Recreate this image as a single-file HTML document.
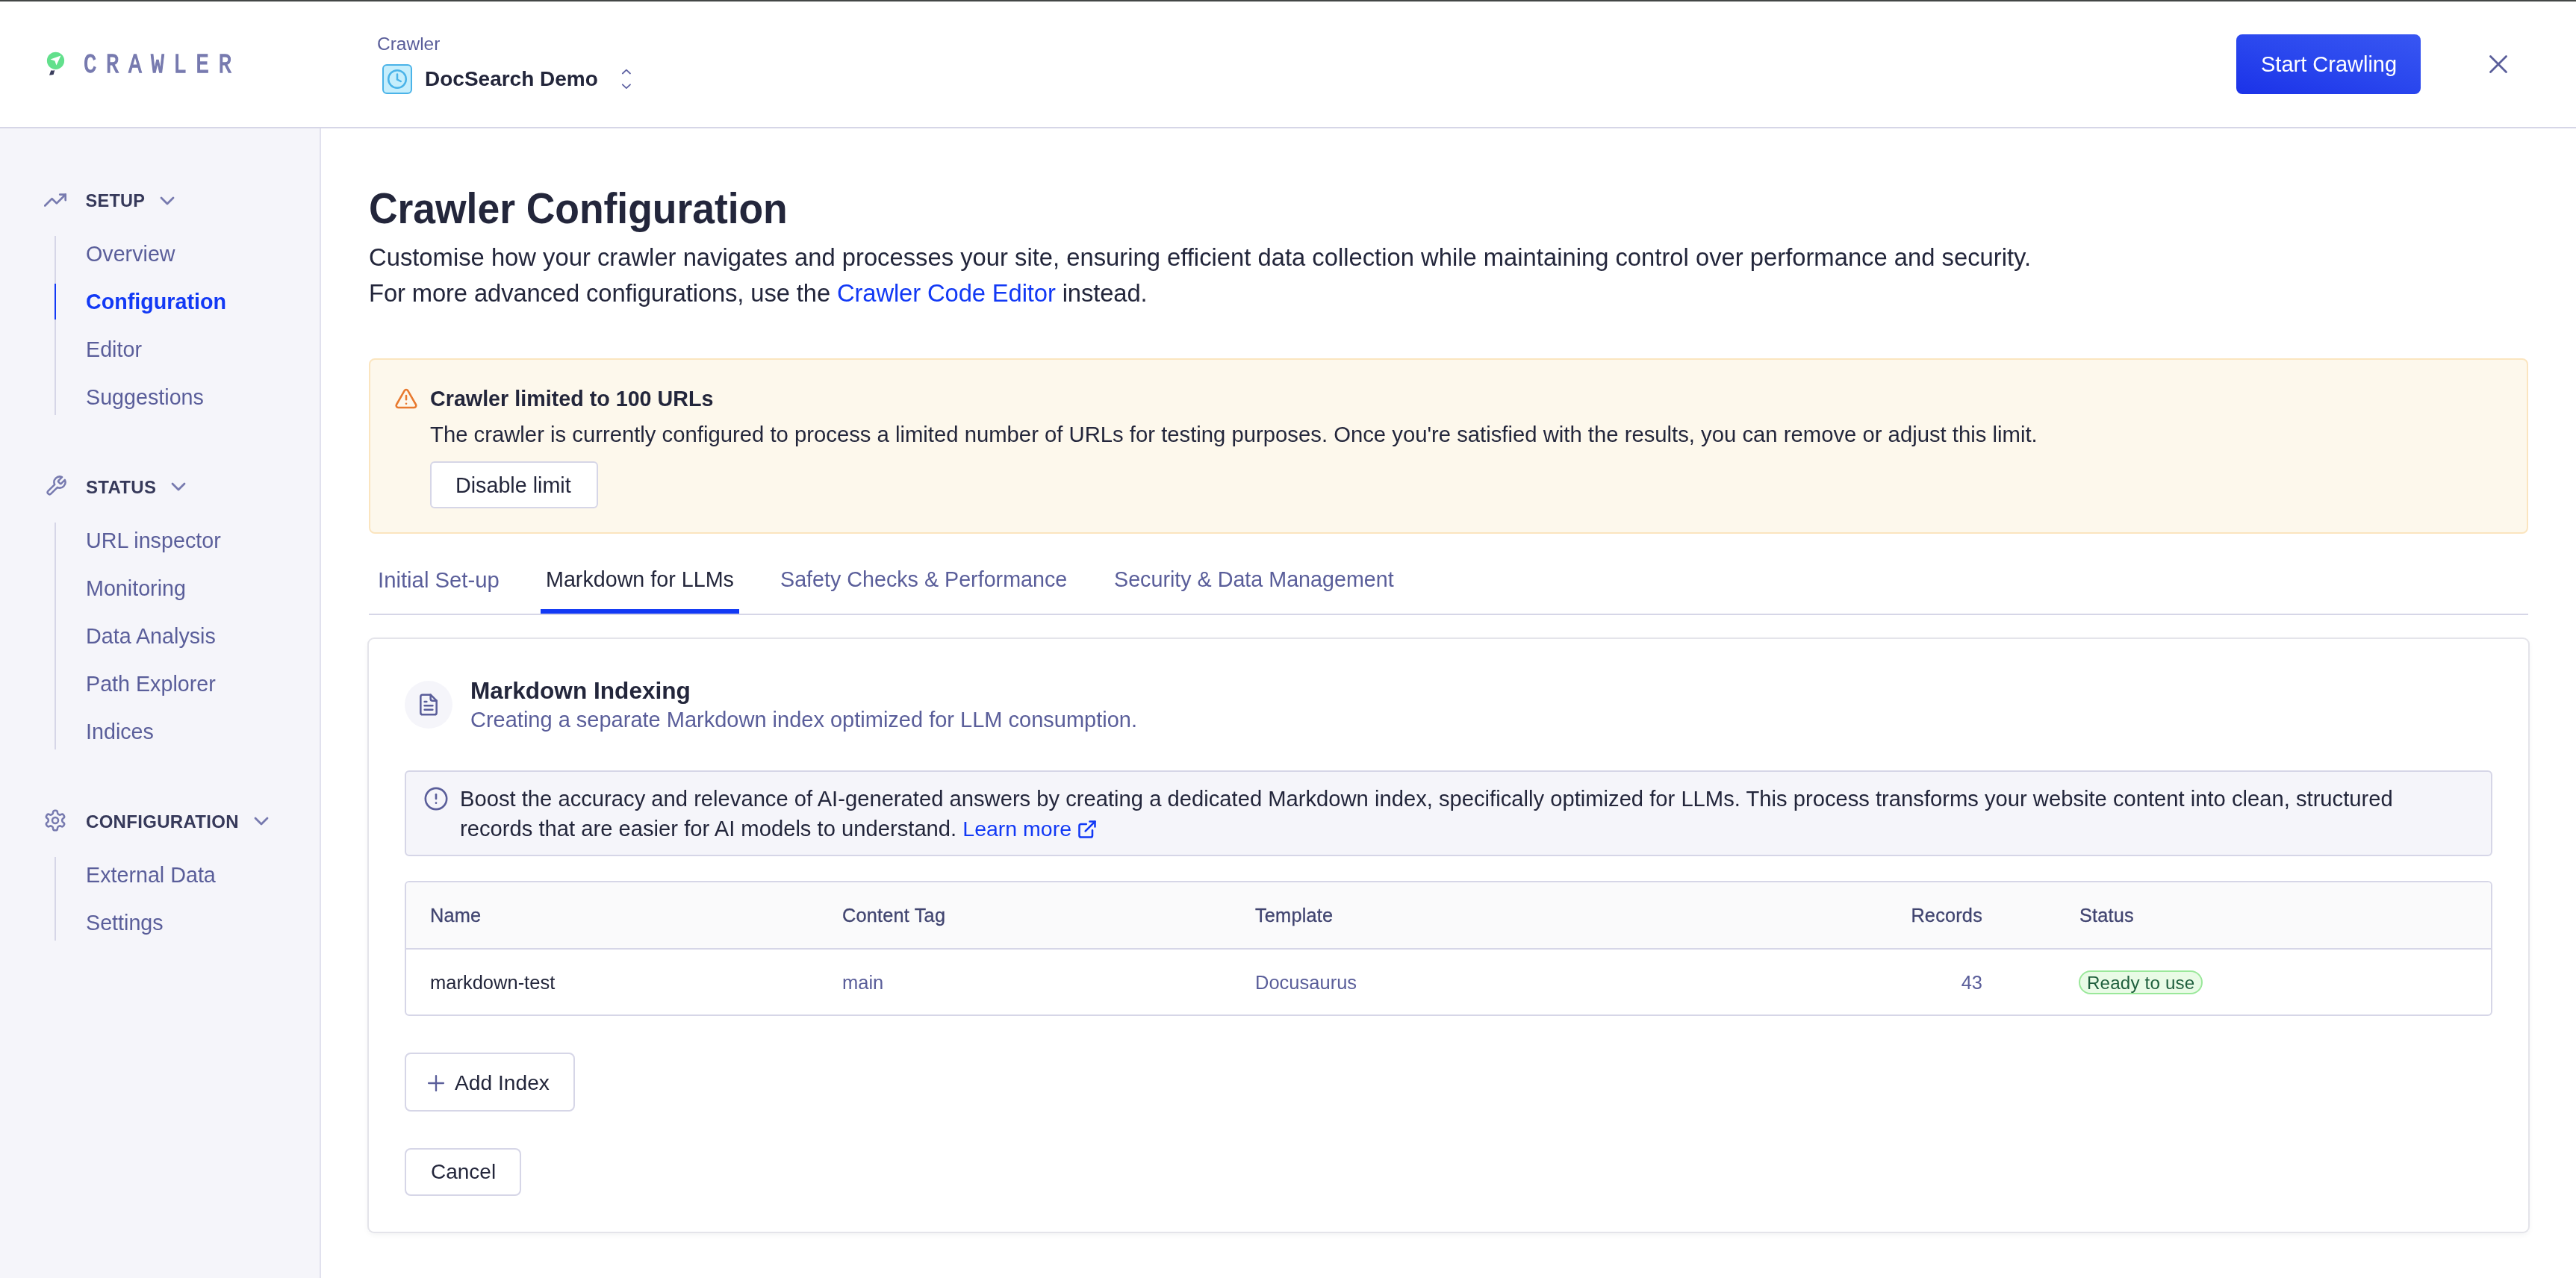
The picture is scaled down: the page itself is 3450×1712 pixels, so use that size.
<!DOCTYPE html>
<html><head><meta charset="utf-8">
<style>
*{margin:0;padding:0;box-sizing:border-box}
body{will-change:transform}html,body{width:3450px;height:1712px;overflow:hidden;background:#fff;font-family:"Liberation Sans",sans-serif;color:#23263b}
.a{position:absolute;white-space:nowrap;line-height:1}
#topbar{position:absolute;left:0;top:0;width:3450px;height:2px;background:#444746}
#header{position:absolute;left:0;top:2px;width:3450px;height:170px;border-bottom:2px solid #d6d6e7;background:#fff}
#sidebar{position:absolute;left:0;top:172px;width:430px;height:1540px;background:#f5f5fa;border-right:2px solid #e1e1ee}
.sec{font-size:24px;font-weight:bold;color:#36395a;letter-spacing:0.3px}
.item{font-size:28.7px;color:#5a5e9a}
.vline{position:absolute;left:73px;width:2px;background:#d6d6e7}
.btn{position:absolute;background:#fff;border:2px solid #d6d6e7;border-radius:8px}
.th{font-size:25.3px;color:#404470;letter-spacing:0.2px;-webkit-text-stroke:0.3px #404470}
.td{font-size:25.5px}
</style></head><body>
<div id="topbar"></div>
<div id="header"></div>
<div id="sidebar"></div>

<!-- logo -->
<svg class="a" style="left:60px;top:66px" width="32" height="40" viewBox="0 0 32 40">
  <circle cx="14.5" cy="15.3" r="11.6" fill="#62e08c"/>
  <path d="M21.5 8.6 L7.5 13.6 L13.4 15.4 L15.5 21.5 Z" fill="#fff"/>
  <path d="M8.3 28.2 Q10.8 28.9 13.3 28 L11.6 34.1 L6 34.7 Z" fill="#3a3d5c"/>
</svg>
<div class="a" style="left:112px;top:68.6px;font-family:'Liberation Mono',monospace;font-size:37px;letter-spacing:16.4px;color:#777aaf;-webkit-text-stroke:1.4px #777aaf;transform:scaleX(0.78);transform-origin:0 0">CRAWLER</div>

<div class="a" style="left:505px;top:47px;font-size:24.5px;color:#5a5e9a">Crawler</div>
<div class="a" style="left:512px;top:86px;width:40px;height:40px;background:#c6eefc;border:2px solid #4ab3e8;border-radius:6px"></div>
<svg class="a" style="left:512px;top:86px" width="40" height="40" viewBox="0 0 40 40">
  <circle cx="20" cy="20" r="11.8" fill="none" stroke="#4ab3e8" stroke-width="2.5"/>
  <path d="M20 13.5 V20.5 L24.8 23" fill="none" stroke="#4ab3e8" stroke-width="2.5" stroke-linecap="round"/>
</svg>
<div class="a" style="left:569px;top:92px;font-size:28px;font-weight:bold;color:#23263b">DocSearch Demo</div>
<svg class="a" style="left:830px;top:89px" width="18" height="34" viewBox="0 0 18 34">
  <path d="M3.8 9.5 L8.9 4.6 L14 9.5" fill="none" stroke="#5f63a3" stroke-width="1.8" stroke-linecap="round" stroke-linejoin="round"/>
  <path d="M3.8 24.3 L8.9 29.1 L14 24.3" fill="none" stroke="#5f63a3" stroke-width="1.8" stroke-linecap="round" stroke-linejoin="round"/>
</svg>

<div class="a" style="left:2995px;top:46px;width:247px;height:80px;border-radius:8px;background:linear-gradient(15deg,#1b32e8 0%,#2a47ee 50%,#3856f2 100%)"></div>
<div class="a" style="left:3028px;top:72px;font-size:29px;color:#fff">Start Crawling</div>
<svg class="a" style="left:3330px;top:70px" width="32" height="32" viewBox="0 0 32 32">
  <path d="M5.5 5.5 L26.5 26.5 M26.5 5.5 L5.5 26.5" stroke="#5a5e9a" stroke-width="2.8" stroke-linecap="round"/>
</svg>

<!-- sidebar -->
<svg class="a" style="left:59px;top:253px" width="30" height="30" viewBox="0 0 24 24" fill="none" stroke="#777aaf" stroke-width="2.2" stroke-linecap="round" stroke-linejoin="round"><polyline points="23 6 13.5 15.5 8.5 10.5 1 18"/><polyline points="17 6 23 6 23 12"/></svg>
<div class="a sec" style="left:114.5px;top:258px;font-size:23.5px">SETUP<svg style="margin-left:14px;vertical-align:top;margin-top:-5px" width="32" height="32" viewBox="0 0 24 24" fill="none" stroke="#777aaf" stroke-width="2.1" stroke-linecap="round" stroke-linejoin="round"><polyline points="6 9 12 15 18 9"/></svg></div>
<div class="vline" style="top:316px;height:240px"></div>
<div class="a" style="left:73px;top:380px;width:2px;height:48px;background:#1239f5"></div>
<div class="a item" style="left:115px;top:326px">Overview</div>
<div class="a item" style="left:115px;top:390px;color:#1239f5;font-weight:bold">Configuration</div>
<div class="a item" style="left:115px;top:454px">Editor</div>
<div class="a item" style="left:115px;top:518px">Suggestions</div>

<svg class="a" style="left:60px;top:636px" width="30" height="30" viewBox="0 0 24 24" fill="none" stroke="#777aaf" stroke-width="2" stroke-linecap="round" stroke-linejoin="round"><path d="M14.7 6.3a1 1 0 0 0 0 1.4l1.6 1.6a1 1 0 0 0 1.4 0l3.77-3.77a6 6 0 0 1-7.94 7.94l-6.91 6.91a2.12 2.12 0 0 1-3-3l6.91-6.91a6 6 0 0 1 7.94-7.94l-3.76 3.76z"/></svg>
<div class="a sec" style="left:115px;top:641px">STATUS<svg style="margin-left:14px;vertical-align:top;margin-top:-5px" width="32" height="32" viewBox="0 0 24 24" fill="none" stroke="#777aaf" stroke-width="2.1" stroke-linecap="round" stroke-linejoin="round"><polyline points="6 9 12 15 18 9"/></svg></div>
<div class="vline" style="top:700px;height:304px"></div>
<div class="a item" style="left:115px;top:710px">URL inspector</div>
<div class="a item" style="left:115px;top:774px">Monitoring</div>
<div class="a item" style="left:115px;top:838px">Data Analysis</div>
<div class="a item" style="left:115px;top:902px">Path Explorer</div>
<div class="a item" style="left:115px;top:966px">Indices</div>

<svg class="a" style="left:58px;top:1083px" width="32" height="32" viewBox="0 0 24 24" fill="none" stroke="#777aaf" stroke-width="1.9" stroke-linecap="round" stroke-linejoin="round"><path d="M12.22 2h-.44a2 2 0 0 0-2 2v.18a2 2 0 0 1-1 1.73l-.43.25a2 2 0 0 1-2 0l-.15-.08a2 2 0 0 0-2.73.73l-.22.38a2 2 0 0 0 .73 2.73l.15.1a2 2 0 0 1 1 1.72v.51a2 2 0 0 1-1 1.74l-.15.09a2 2 0 0 0-.73 2.73l.22.38a2 2 0 0 0 2.730.73l.15-.08a2 2 0 0 1 2 0l.43.25a2 2 0 0 1 1 1.73V20a2 2 0 0 0 2 2h.44a2 2 0 0 0 2-2v-.18a2 2 0 0 1 1-1.73l.43-.25a2 2 0 0 1 2 0l.15.08a2 2 0 0 0 2.73-.73l.22-.39a2 2 0 0 0-.73-2.73l-.15-.08a2 2 0 0 1-1-1.74v-.5a2 2 0 0 1 1-1.74l.15-.09a2 2 0 0 0 .73-2.73l-.22-.38a2 2 0 0 0-2.73-.73l-.15.08a2 2 0 0 1-2 0l-.43-.25a2 2 0 0 1-1-1.73V4a2 2 0 0 0-2-2z"/><circle cx="12" cy="12" r="3"/></svg>
<div class="a sec" style="left:115px;top:1089px">CONFIGURATION<svg style="margin-left:14px;vertical-align:top;margin-top:-5px" width="32" height="32" viewBox="0 0 24 24" fill="none" stroke="#777aaf" stroke-width="2.1" stroke-linecap="round" stroke-linejoin="round"><polyline points="6 9 12 15 18 9"/></svg></div>
<div class="vline" style="top:1148px;height:112px"></div>
<div class="a item" style="left:115px;top:1158px">External Data</div>
<div class="a item" style="left:115px;top:1222px">Settings</div>

<!-- main -->
<div class="a" style="left:494px;top:254px;font-size:53.5px;font-weight:bold;color:#23263b;letter-spacing:-0.05px;transform:scaleY(1.06);transform-origin:0 45.3px">Crawler Configuration</div>
<div class="a" style="left:494px;top:321px;font-size:32.78px;line-height:48px;color:#23263b">Customise how your crawler navigates and processes your site, ensuring efficient data collection while maintaining control over performance and security.<br><span style="letter-spacing:-0.12px">For more advanced configurations, use the <span style="color:#1239f5">Crawler Code Editor</span> instead.</span></div>

<div class="a" style="left:494px;top:480px;width:2892px;height:235px;background:#fdf8ec;border:2px solid #fbe5bf;border-radius:8px"></div>
<svg class="a" style="left:528px;top:518px" width="32" height="32" viewBox="0 0 24 24" fill="none" stroke="#e8792e" stroke-width="1.9" stroke-linecap="round" stroke-linejoin="round"><path d="m21.73 18-8-14a2 2 0 0 0-3.48 0l-8 14A2 2 0 0 0 4 21h16a2 2 0 0 0 1.73-3"/><path d="M12 9v4"/><path d="M12 17h.01"/></svg>
<div class="a" style="left:576px;top:520px;font-size:28.7px;font-weight:bold;color:#23263b">Crawler limited to 100 URLs</div>
<div class="a" style="left:576px;top:568px;font-size:29.27px;color:#23263b">The crawler is currently configured to process a limited number of URLs for testing purposes. Once you're satisfied with the results, you can remove or adjust this limit.</div>
<div class="btn" style="left:576px;top:618px;width:225px;height:63px;border-radius:6px"></div>
<div class="a" style="left:610px;top:636px;font-size:28.7px;color:#23263b">Disable limit</div>

<!-- tabs -->
<div class="a" style="left:494px;top:822px;width:2892px;height:2px;background:#d6d6e7"></div>
<div class="a" style="left:724px;top:816px;width:266px;height:6px;background:#1239f5"></div>
<div class="a" style="left:506px;top:762px;font-size:29.3px;color:#5a5e9a">Initial Set-up</div>
<div class="a" style="left:731px;top:762px;font-size:28.7px;color:#23263b">Markdown for LLMs</div>
<div class="a" style="left:1045px;top:762px;font-size:28.7px;color:#5a5e9a">Safety Checks &amp; Performance</div>
<div class="a" style="left:1492px;top:762px;font-size:28.7px;color:#5a5e9a">Security &amp; Data Management</div>

<!-- card -->
<div class="a" style="left:494px;top:856px;width:2892px;height:794px;background:#fff;border-radius:7px;box-shadow:0 0 0 2px #e4e4ea,0 3px 8px rgba(35,38,59,0.07)"></div>
<div class="a" style="left:542px;top:912px;width:64px;height:64px;border-radius:50%;background:#f5f5fa"></div>
<svg class="a" style="left:558px;top:928px" width="32" height="32" viewBox="0 0 24 24" fill="none" stroke="#5a5e9a" stroke-width="1.9" stroke-linecap="round" stroke-linejoin="round"><path d="M14 2H6a2 2 0 0 0-2 2v16a2 2 0 0 0 2 2h12a2 2 0 0 0 2-2V8z"/><path d="M14 2v4a2 2 0 0 0 2 2h4"/><line x1="16" y1="13" x2="8" y2="13"/><line x1="16" y1="17" x2="8" y2="17"/><line x1="10" y1="9" x2="8" y2="9"/></svg>
<div class="a" style="left:630px;top:910px;font-size:31.6px;font-weight:bold;color:#23263b">Markdown Indexing</div>
<div class="a" style="left:630px;top:950px;font-size:29px;color:#5a5e9a">Creating a separate Markdown index optimized for LLM consumption.</div>

<div class="a" style="left:542px;top:1032px;width:2796px;height:115px;background:#f5f5fa;border:2px solid #d6d6e7;border-radius:6px"></div>
<svg class="a" style="left:567px;top:1053px" width="34" height="34" viewBox="0 0 24 24" fill="none" stroke="#5a5e9a" stroke-width="1.85" stroke-linecap="round" stroke-linejoin="round"><circle cx="12" cy="12" r="10"/><line x1="12" y1="8" x2="12" y2="12"/><line x1="12" y1="16" x2="12.01" y2="16"/></svg>
<div class="a" style="left:616px;top:1050px;font-size:29.2px;line-height:40px;color:#23263b">Boost the accuracy and relevance of AI-generated answers by creating a dedicated Markdown index, specifically optimized for LLMs. This process transforms your website content into clean, structured<br>records that are easier for AI models to understand. <span style="color:#1239f5;font-size:28.5px">Learn more <svg style="vertical-align:-5px;margin-left:-1px" width="28" height="28" viewBox="0 0 24 24" fill="none" stroke="#1239f5" stroke-width="2.2" stroke-linecap="round" stroke-linejoin="round"><path d="M18 13v6a2 2 0 0 1-2 2H5a2 2 0 0 1-2-2V8a2 2 0 0 1 2-2h6"/><polyline points="15 3 21 3 21 9"/><line x1="10" y1="14" x2="21" y2="3"/></svg></span></div>

<!-- table -->
<div class="a" style="left:542px;top:1180px;width:2796px;height:181px;background:#fff;border:2px solid #d6d6e7;border-radius:6px;overflow:hidden">
  <div style="position:absolute;left:0;top:0;width:100%;height:90px;background:#fafafb;border-bottom:2px solid #d6d6e7"></div>
</div>
<div class="a th" style="left:576px;top:1214px">Name</div>
<div class="a th" style="left:1128px;top:1214px">Content Tag</div>
<div class="a th" style="left:1681px;top:1214px">Template</div>
<div class="a th" style="left:2655px;top:1214px;transform:translateX(-100%)">Records</div>
<div class="a th" style="left:2785px;top:1214px">Status</div>
<div class="a td" style="left:576px;top:1304px;color:#23263b">markdown-test</div>
<div class="a td" style="left:1128px;top:1304px;color:#5a5e9a">main</div>
<div class="a td" style="left:1681px;top:1304px;color:#5a5e9a">Docusaurus</div>
<div class="a td" style="left:2655px;top:1304px;color:#5a5e9a;transform:translateX(-100%)">43</div>
<div class="a" style="left:2784px;top:1300px;width:166px;height:32px;border-radius:16px;background:#e9fbe6;border:2px solid #9ae89a"></div>
<div class="a" style="left:2795px;top:1305px;font-size:24.2px;letter-spacing:0.15px;color:#1f5f3d">Ready to use</div>

<div class="btn" style="left:542px;top:1410px;width:228px;height:79px"></div>
<svg class="a" style="left:570px;top:1437px" width="28" height="28" viewBox="0 0 24 24" fill="none" stroke="#5a5e9a" stroke-width="2" stroke-linecap="round"><line x1="12" y1="3.5" x2="12" y2="20.5"/><line x1="3.5" y1="12" x2="20.5" y2="12"/></svg>
<div class="a" style="left:609px;top:1436px;font-size:28.2px;color:#23263b">Add Index</div>
<div class="btn" style="left:542px;top:1538px;width:156px;height:64px"></div>
<div class="a" style="left:577px;top:1556px;font-size:28px;color:#23263b">Cancel</div>

</body></html>
